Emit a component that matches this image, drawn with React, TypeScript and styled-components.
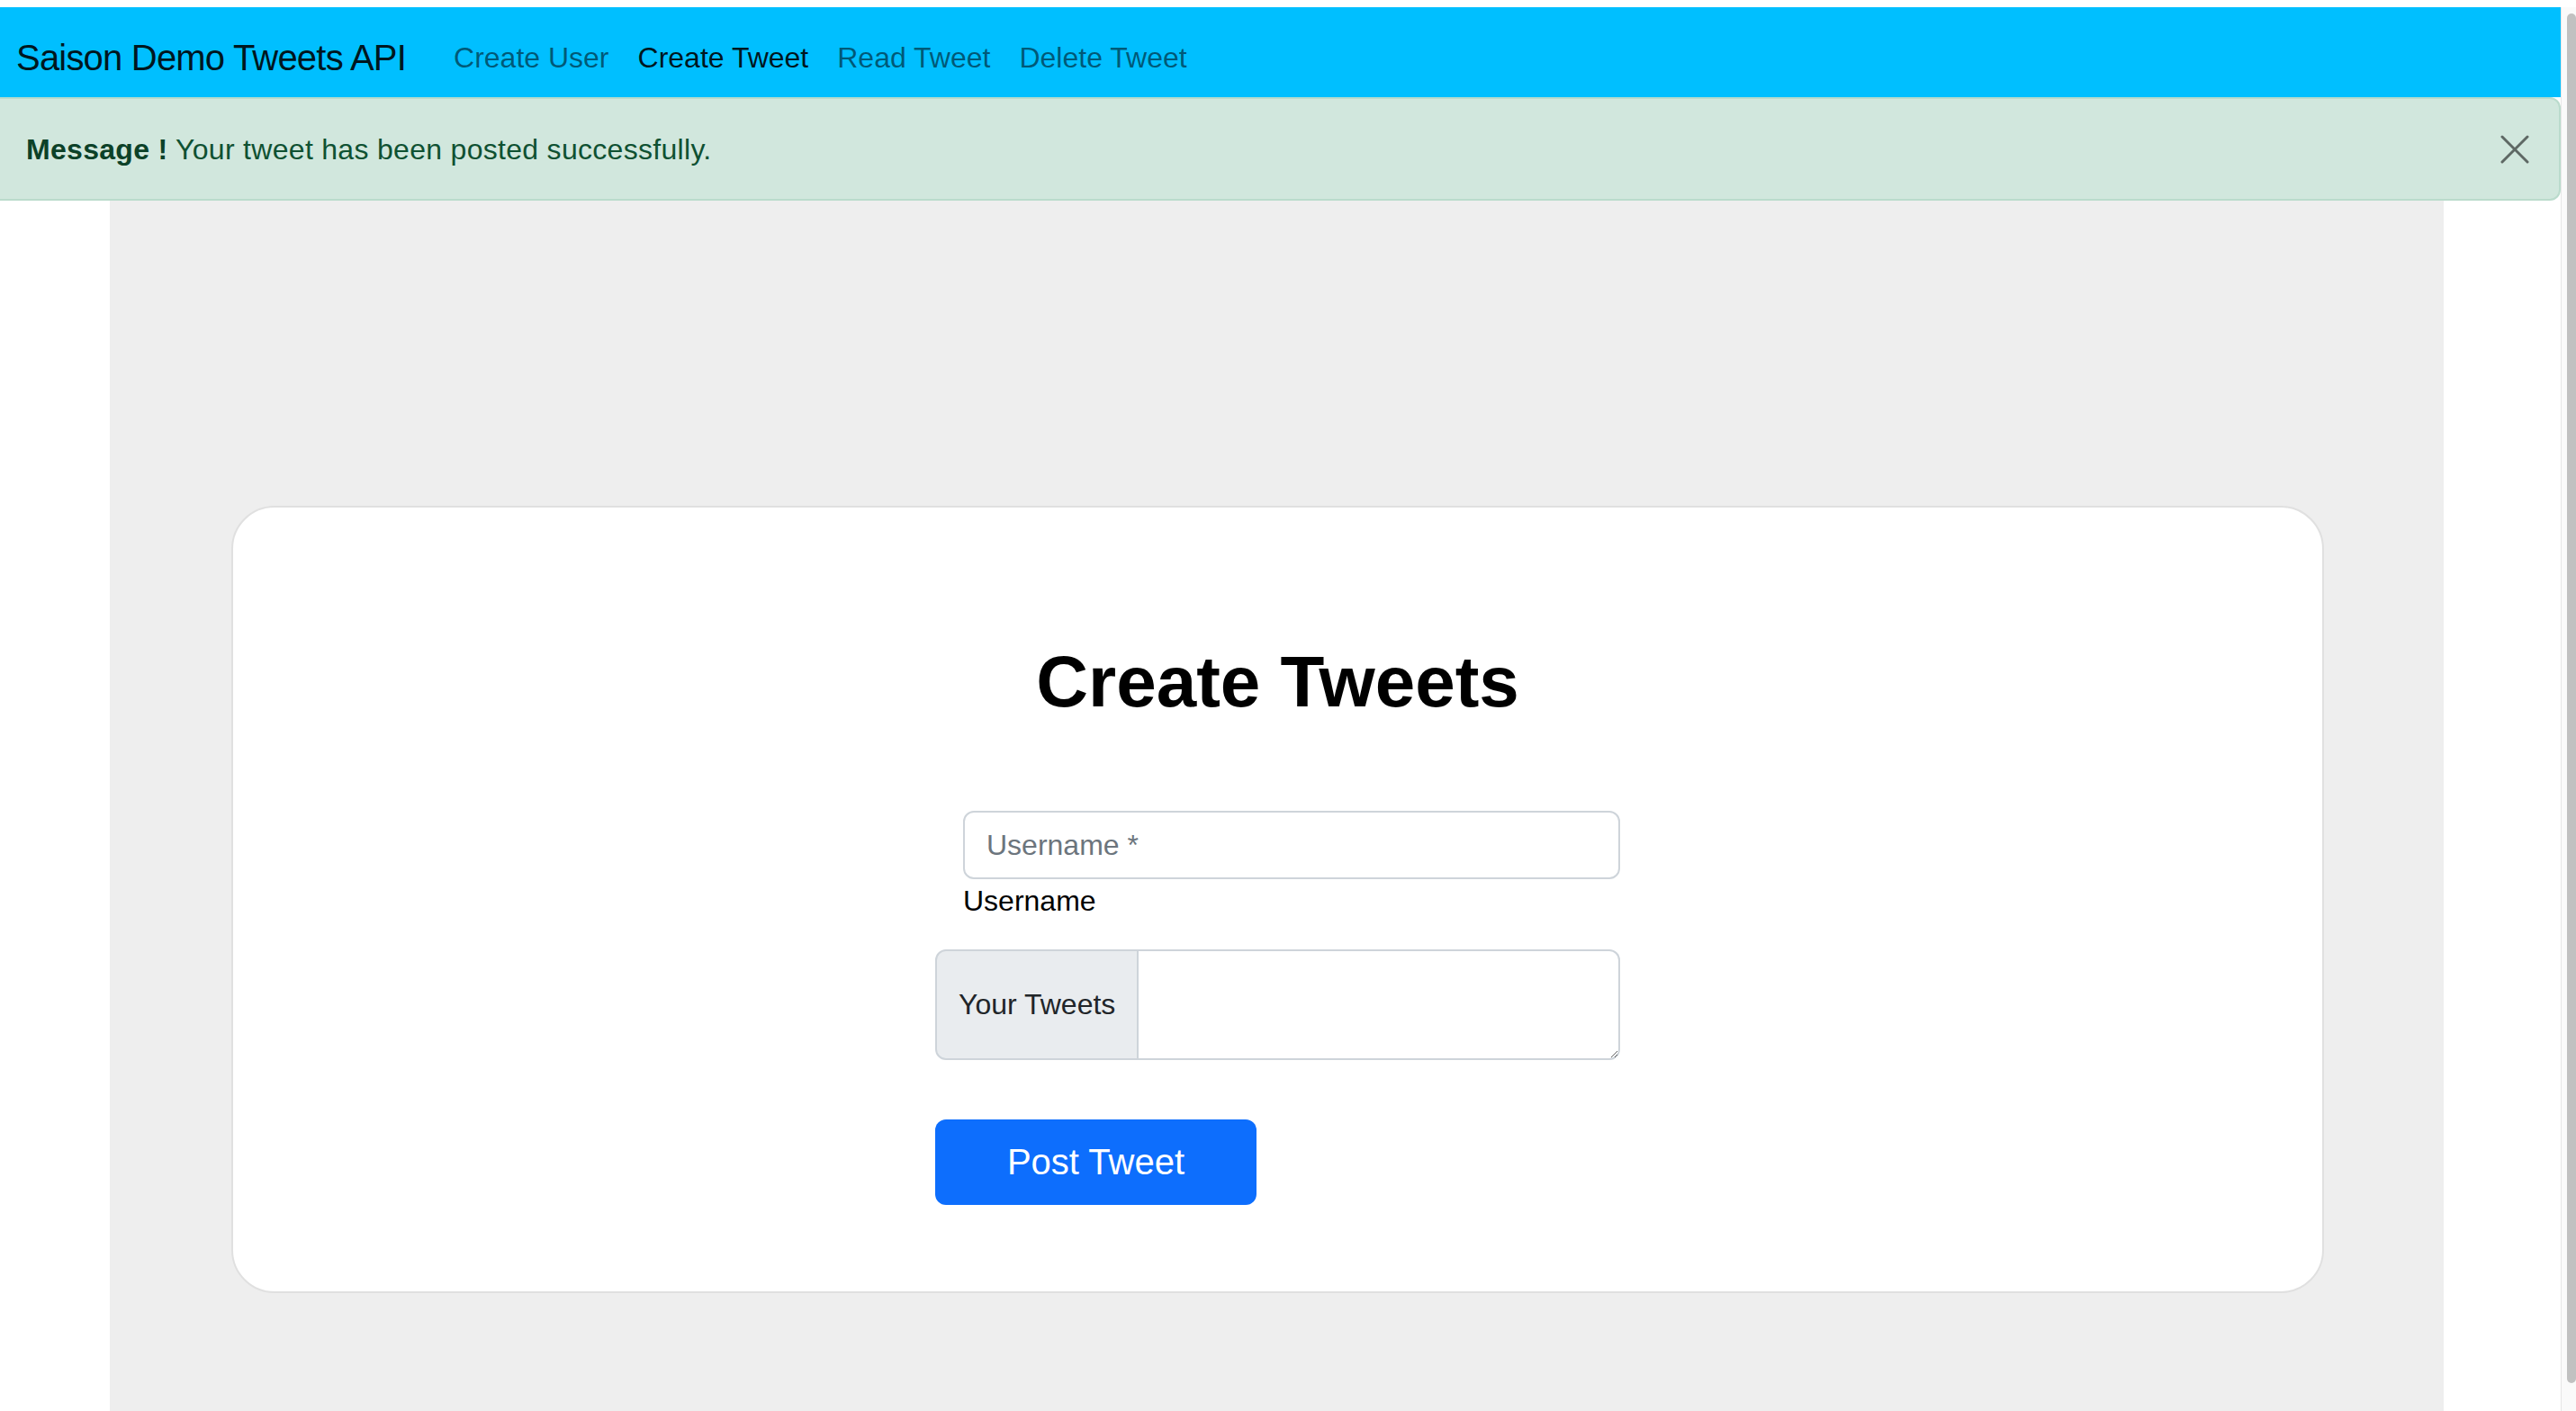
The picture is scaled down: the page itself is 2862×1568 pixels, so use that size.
import styled, { createGlobalStyle } from "styled-components";

const GlobalStyle = createGlobalStyle`
  * {
    box-sizing: border-box;
  }
  html,
  body {
    margin: 0;
    padding: 0;
    height: 100%;
    overflow: hidden;
    background: #fff;
  }
  body {
    font-family: "Liberation Sans", Arial, sans-serif;
    color: #212529;
  }
  #root {
    height: 100%;
  }
`;

const NAV_LINKS = [
  { label: "Create User", active: false },
  { label: "Create Tweet", active: true },
  { label: "Read Tweet", active: false },
  { label: "Delete Tweet", active: false },
];

export default function App() {
  return (
    <>
      <GlobalStyle />
      <Shell>
        <Page>
          <Navbar>
            <Brand href="#">Saison Demo Tweets API</Brand>
            <NavList>
              {NAV_LINKS.map((link) => (
                <NavLink key={link.label} href="#" active={link.active}>
                  {link.label}
                </NavLink>
              ))}
            </NavList>
          </Navbar>

          <Alert role="alert">
            <span>
              <strong>Message !</strong> Your tweet has been posted
              successfully.
            </span>
            <CloseButton type="button" aria-label="Close">
              <svg width="32" height="32" viewBox="0 0 32 32">
                <path
                  d="M2 2 L30 30 M30 2 L2 30"
                  stroke="rgba(0,0,0,0.55)"
                  strokeWidth="3"
                  strokeLinecap="round"
                />
              </svg>
            </CloseButton>
          </Alert>

          <Main>
            <GreyPanel>
              <Card>
                <Title>Create Tweets</Title>
                <Form onSubmit={(e) => e.preventDefault()}>
                  <UsernameField>
                    <TextInput id="username" placeholder="Username *" />
                    <Label htmlFor="username">Username</Label>
                  </UsernameField>
                  <InputGroup>
                    <GroupText>Your Tweets</GroupText>
                    <TextArea aria-label="Your Tweets" />
                  </InputGroup>
                  <SubmitButton type="submit">Post Tweet</SubmitButton>
                </Form>
              </Card>
            </GreyPanel>
          </Main>
        </Page>

        <ScrollTrack>
          <ScrollThumb />
        </ScrollTrack>
      </Shell>
    </>
  );
}

const Shell = styled.div`
  height: 100vh;
  padding-top: 8px;
  display: flex;
  background: #fff;
  overflow: hidden;
`;

const Page = styled.div`
  flex: 1;
  min-width: 0;
  display: flex;
  flex-direction: column;
`;

const Navbar = styled.nav`
  height: 100px;
  flex-shrink: 0;
  background-color: #00bfff;
  display: flex;
  align-items: center;
  padding: 12px 0 0 18px;
`;

const Brand = styled.a`
  font-size: 40px;
  line-height: 60px;
  letter-spacing: -0.8px;
  color: rgba(0, 0, 0, 0.9);
  text-decoration: none;
  margin-right: 37px;
  white-space: nowrap;
`;

const NavList = styled.div`
  display: flex;
  align-items: center;
`;

const NavLink = styled.a<{ active: boolean }>`
  padding: 0 16px;
  font-size: 32px;
  line-height: 48px;
  text-decoration: none;
  white-space: nowrap;
  color: ${(p) => (p.active ? "rgba(0, 0, 0, 0.9)" : "rgba(0, 0, 0, 0.55)")};
`;

const Alert = styled.div`
  height: 115px;
  flex-shrink: 0;
  display: flex;
  align-items: center;
  justify-content: space-between;
  padding: 0 33px 0 29px;
  background-color: #d1e7dd;
  border: 2px solid #badbcc;
  border-left: none;
  border-radius: 0 12px 12px 0;
  color: #0f5132;
  font-size: 32px;
  line-height: 48px;
  letter-spacing: 0.3px;

  strong {
    font-weight: 700;
    color: #0c4128;
  }
`;

const CloseButton = styled.button`
  width: 32px;
  height: 32px;
  padding: 0;
  border: none;
  background: transparent;
  display: flex;
  cursor: pointer;
`;

const Main = styled.main`
  flex: 1;
  min-height: 0;
  display: flex;
  background: #fff;
`;

const GreyPanel = styled.section`
  width: 2593px;
  margin-left: 122px;
  background-color: #eeeeee;
  padding: 339px 133px 0 135px;
`;

const Card = styled.div`
  background: #fff;
  border: 2px solid #e0e0e0;
  border-radius: 48px;
  padding: 146px 0 96px;
  display: flex;
  flex-direction: column;
  align-items: center;
`;

const Title = styled.h1`
  margin: 0 0 95px;
  font-size: 80px;
  line-height: 96px;
  font-weight: 700;
  color: #000;
`;

const Form = styled.form`
  width: 761px;
  display: flex;
  flex-direction: column;
  align-items: flex-start;
`;

const UsernameField = styled.div`
  align-self: stretch;
  margin-left: 31px;
  display: flex;
  flex-direction: column;
`;

const TextInput = styled.input`
  height: 76px;
  padding: 0 24px;
  border: 2px solid #ced4da;
  border-radius: 12px;
  font-family: inherit;
  font-size: 32px;
  color: #212529;
  outline: none;

  &::placeholder {
    color: #6c757d;
  }
`;

const Label = styled.label`
  font-size: 32px;
  line-height: 48px;
  color: #000;
  margin-bottom: 30px;
`;

const InputGroup = styled.div`
  align-self: stretch;
  height: 123px;
  display: flex;
`;

const GroupText = styled.span`
  display: flex;
  align-items: center;
  padding: 0 24px;
  background-color: #e9ecef;
  border: 2px solid #ced4da;
  border-radius: 12px 0 0 12px;
  font-size: 32px;
  color: #212529;
  white-space: nowrap;
`;

const TextArea = styled.textarea`
  flex: 1;
  height: 100%;
  padding: 12px 24px;
  border: 2px solid #ced4da;
  border-left: none;
  border-radius: 0 12px 12px 0;
  font-family: inherit;
  font-size: 32px;
  outline: none;
  resize: vertical;
`;

const SubmitButton = styled.button`
  margin-top: 66px;
  width: 357px;
  height: 95px;
  border: none;
  border-radius: 12px;
  background-color: #0d6efd;
  color: #fff;
  font-family: inherit;
  font-size: 40px;
  cursor: pointer;
`;

const ScrollTrack = styled.div`
  width: 17px;
  flex-shrink: 0;
  background: #fafafa;
  border-left: 1px solid #e6e6e6;
  padding-top: 7px;
`;

const ScrollThumb = styled.div`
  width: 10px;
  height: 1522px;
  margin-left: 6px;
  background: #c1c1c1;
  border-radius: 6px;
`;
